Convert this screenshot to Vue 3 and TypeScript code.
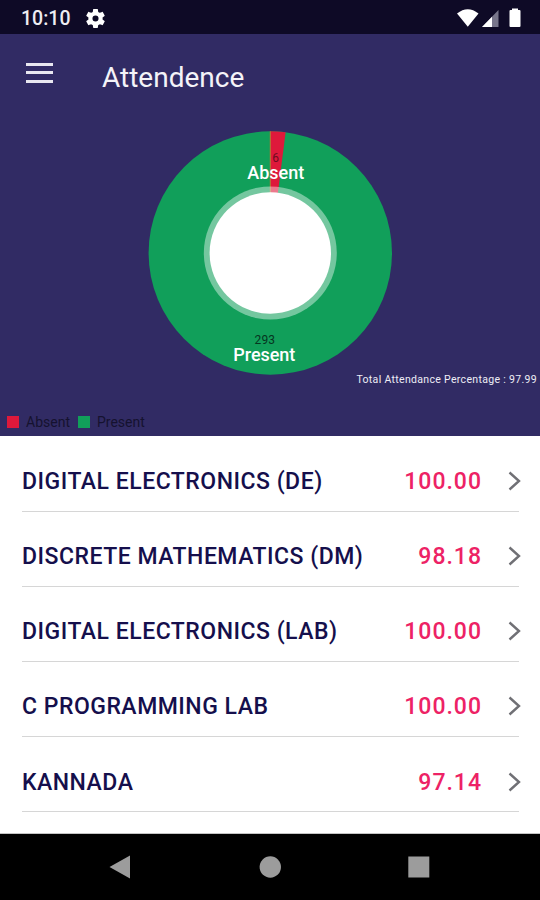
<script setup lang="ts">
interface Slice {
  label: string
  value: number
  color: string
}
interface Subject {
  name: string
  percent: string
}

const slices: Slice[] = [
  { label: 'Absent', value: 6, color: '#de193b' },
  { label: 'Present', value: 293, color: '#119f5a' },
]

const subjects: Subject[] = [
  { name: 'DIGITAL ELECTRONICS (DE)', percent: '100.00' },
  { name: 'DISCRETE MATHEMATICS (DM)', percent: '98.18' },
  { name: 'DIGITAL ELECTRONICS (LAB)', percent: '100.00' },
  { name: 'C PROGRAMMING LAB', percent: '100.00' },
  { name: 'KANNADA', percent: '97.14' },
]

const radius = 121.7
const total = slices.reduce((sum, s) => sum + s.value, 0)
const sweep = (slices[0].value / total) * Math.PI * 2
const absentPath = `M0 0V${-radius}A${radius} ${radius} 0 0 1 ${radius * Math.sin(sweep)} ${-radius * Math.cos(sweep)}Z`
</script>

<template>
  <div class="screen">
    <header class="status">
      <span class="clock">10:10</span>
      <svg class="gear" width="19" height="19" viewBox="2 2 20 20">
        <path fill="#fff" fill-rule="evenodd" d="M19.43 12.98c.04-.32.07-.64.07-.98s-.03-.66-.07-.98l2.11-1.65c.19-.15.24-.42.12-.64l-2-3.46c-.12-.22-.39-.3-.61-.22l-2.49 1c-.52-.4-1.08-.73-1.69-.98l-.38-2.65C14.46 2.18 14.25 2 14 2h-4c-.25 0-.46.18-.49.42l-.38 2.65c-.61.25-1.17.59-1.69.98l-2.49-1c-.23-.09-.49 0-.61.22l-2 3.46c-.13.22-.07.49.12.64l2.11 1.65c-.04.32-.07.65-.07.98s.03.66.07.98l-2.11 1.65c-.19.15-.24.42-.12.64l2 3.46c.12.22.39.3.61.22l2.49-1c.52.4 1.08.73 1.69.98l.38 2.65c.03.24.24.42.49.42h4c.25 0 .46-.18.49-.42l.38-2.65c.61-.25 1.17-.59 1.69-.98l2.49 1c.23.09.49 0 .61-.22l2-3.46c.12-.22.07-.49-.12-.64l-2.11-1.65zM12 15.2a3.2 3.2 0 1 1 0-6.4 3.2 3.2 0 0 1 0 6.4z" />
      </svg>
      <svg class="signals" width="66" height="20" viewBox="0 0 66 20">
        <path fill="#fff" d="M1 5.500Q11.800-3 22.500 5.500L11.800 18.800Z" />
        <path fill="#77758a" d="M42.500 2V19H26Z" />
        <path fill="#fff" d="M36 8.700V19H26Z" />
        <path fill="#fff" d="M56 2V.5h6V2h1.500q1 0 1 1V18q0 1-1 1h-9q-1 0-1-1V3q0-1 1-1z" />
      </svg>
    </header>

    <section class="summary">
      <div class="toolbar">
        <div class="menu"><i></i><i></i><i></i></div>
        <h1>Attendence</h1>
      </div>
      <svg class="chart" width="540" height="254" viewBox="0 0 540 254">
        <g transform="translate(270.300 127)">
          <circle :r="radius" :fill="slices[1].color" />
          <path :d="absentPath" :fill="slices[0].color" />
          <path :d="`M0 0V${-radius}`" stroke="#b87b32" stroke-width="1" />
          <circle r="66.500" fill="#fff" fill-opacity=".42" />
          <circle r="60.700" fill="#fff" />
        </g>
        <g text-anchor="middle">
          <text class="count dim" x="275.500" y="36">{{ slices[0].value }}</text>
          <text class="label" x="275.800" y="52.500" textLength="57">{{ slices[0].label }}</text>
          <text class="count" x="264.800" y="217.500" textLength="20.500">{{ slices[1].value }}</text>
          <text class="label" x="264.300" y="234.500" textLength="62">{{ slices[1].label }}</text>
        </g>
      </svg>
      <p class="total"><span>Total Attendance Percentage : 97.99</span></p>
      <div class="legend">
        <span v-for="s in slices" :key="s.label" class="key">
          <svg width="12" height="12"><rect width="12" height="12" :fill="s.color" /></svg>
          <span>{{ s.label }}</span>
        </span>
      </div>
    </section>

    <main class="list">
      <div v-for="s in subjects" :key="s.name" class="row">
        <span class="name">{{ s.name }}</span>
        <span class="percent">{{ s.percent }}</span>
        <svg class="chevron" width="13" height="20" viewBox="0 0 13 20">
          <path d="M1.500 1.500L11 10L1.500 18.500" fill="none" stroke="#707075" stroke-width="2.400" />
        </svg>
      </div>
    </main>

    <nav class="navbar">
      <svg width="540" height="66" viewBox="0 0 540 66" fill="#9c9c9c">
        <path d="M109.500 33L130 21.500V44.500Z" />
        <circle cx="270.300" cy="33" r="10.700" />
        <rect x="408.300" y="22.500" width="21" height="21" />
      </svg>
    </nav>
  </div>
</template>

<style>
body {
  margin: 0;
}
</style>

<style scoped>
.screen {
  width: 540px;
  height: 900px;
  display: flex;
  flex-direction: column;
  overflow: hidden;
  background: #fff;
  font-family: Roboto, "Liberation Sans", sans-serif;
}
.status {
  height: 34px;
  box-sizing: border-box;
  padding: 2px 18px 0 21px;
  display: flex;
  align-items: center;
  background: #0e0a26;
  color: #eeedf2;
}
.clock {
  width: 65px;
  font-size: 19.5px;
  font-weight: 500;
}
.signals {
  margin: -1px 0 0 auto;
}
.summary {
  height: 401.5px;
  flex: none;
  display: flex;
  flex-direction: column;
  background: #312b64;
}
.toolbar {
  height: 92px;
  flex: none;
  display: flex;
  align-items: flex-start;
}
.menu {
  width: 27px;
  margin: 29px 49px 0 26px;
  display: flex;
  flex-direction: column;
  gap: 5.4px;
}
.menu i {
  height: 3px;
  background: #e8e7f0;
}
h1 {
  margin: 26px 0 0;
  font-size: 28px;
  line-height: 36px;
  font-weight: 400;
  color: #f4f3f8;
}
.chart {
  display: block;
  flex: none;
}
.count {
  font-size: 12px;
  fill: #06351f;
}
.count.dim {
  fill: #6d0c20;
}
.label {
  font-size: 18px;
  font-weight: 500;
  fill: #fff;
}
.total {
  margin: -8px 3px 0 0;
  text-align: right;
  font-size: 10.5px;
  line-height: 16px;
  letter-spacing: 0.32px;
  color: #eeedf5;
}
.legend {
  margin-top: 26px;
  padding-left: 7px;
  display: flex;
  gap: 8px;
  font-size: 14px;
  line-height: 16px;
  color: #15122f;
}
.key {
  display: flex;
  align-items: center;
  gap: 7px;
}
.list {
  height: 398px;
  flex: none;
  box-sizing: border-box;
  padding: 0 21px 0 22px;
  border-bottom: 1px solid #c4c4c4;
}
.row {
  height: 75.2px;
  box-sizing: border-box;
  padding-top: 15px;
  display: flex;
  align-items: center;
  border-bottom: 1.5px solid #d6d6d6;
}
.row:first-child {
  height: 76px;
}
.name {
  padding-top: 1px;
  font-size: 23px;
  font-weight: 500;
  letter-spacing: 0.5px;
  color: #150f4c;
  white-space: nowrap;
}
.percent {
  margin-left: auto;
  padding-top: 1px;
  font-size: 23px;
  font-weight: 500;
  letter-spacing: 1px;
  color: #ed2265;
}
.chevron {
  margin: 0 -2px 0 26px;
}
.navbar {
  flex: 1;
  background: #000;
}
.navbar svg {
  display: block;
}
</style>
